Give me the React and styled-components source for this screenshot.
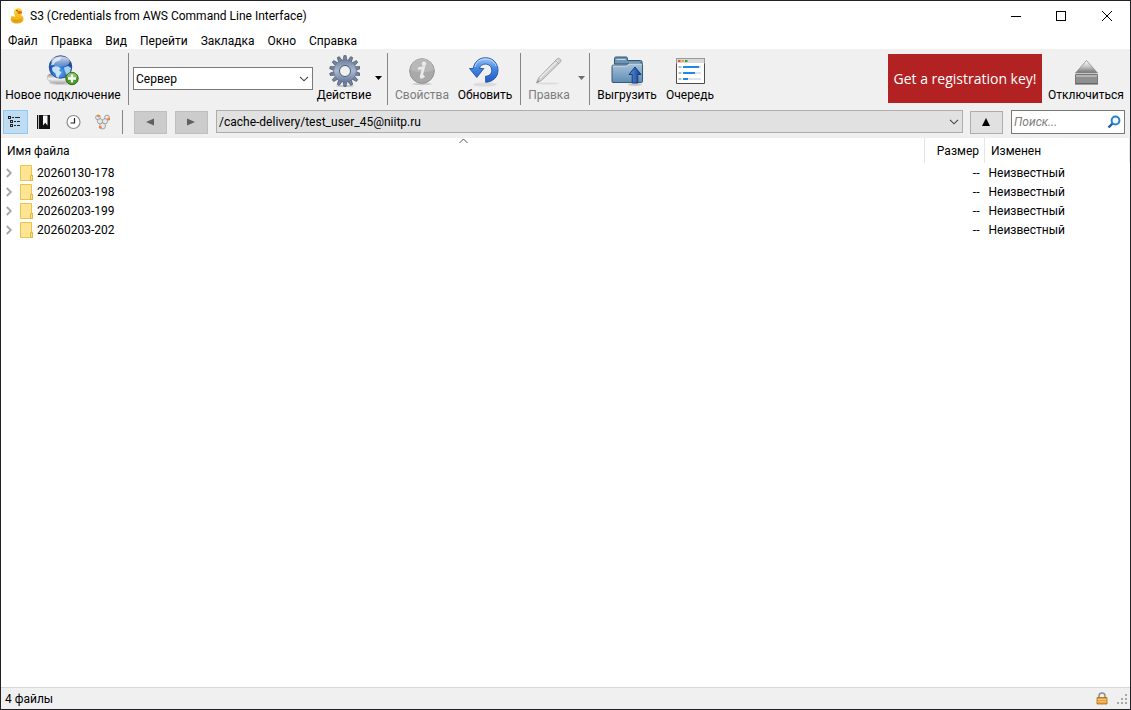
import React, { useState } from "react";
import styled, { createGlobalStyle, css } from "styled-components";

const Global = createGlobalStyle`
  *, *::before, *::after { box-sizing: border-box; }
  body { margin: 0; background: #fff; }
  body, button, input, select, table {
    font-family: "Segoe UI", Roboto, "Open Sans", sans-serif;
    font-size: 12px;
    line-height: 16px;
    color: #000;
  }
`;

const Window = styled.div`
  display: flex;
  flex-direction: column;
  min-height: 100vh;
  border: 1px solid #222226;
  background: #fff;
  white-space: nowrap;
`;

const TitleBar = styled.header`
  display: flex;
  align-items: center;
  height: 30px;
  padding-left: 7px;
`;

const Title = styled.h1`
  flex: 1;
  margin: 0 0 0 4px;
  font-size: 12px;
  font-weight: 400;
`;

const CaptionButton = styled.button`
  display: flex;
  align-items: center;
  justify-content: center;
  width: 46px;
  height: 28px;
  padding: 0;
  border: 0;
  background: none;
`;

const MenuBar = styled.nav`
  display: flex;
  height: 18px;
`;

const MenuItem = styled.button`
  padding: 2px 6px 0 7px;
  border: 0;
  background: none;
`;

const Toolbar = styled.div`
  display: flex;
  height: 59px;
  padding: 4px 4px 0 2px;
  background: #f0f0f0;
`;

const ToolButton = styled.button`
  display: flex;
  flex: none;
  flex-direction: column;
  align-items: center;
  width: ${(p) => p.$width}px;
  height: 52px;
  padding: 2px 0 0;
  border: 0;
  background: none;
  color: #000;
  &:disabled { color: #7d7d7d; }
`;

const ArrowButton = styled.button`
  flex: none;
  display: flex;
  align-items: center;
  justify-content: ${(p) => p.$align || "flex-start"};
  width: ${(p) => p.$width}px;
  height: 50px;
  padding: 0;
  border: 0;
  background: none;
  color: #000;
  &:disabled { color: #6d6d6d; }
`;

const Separator = styled.div`
  flex: none;
  width: 1px;
  height: ${(p) => p.$height}px;
  margin: 0 ${(p) => p.$after}px 0 ${(p) => p.$before}px;
  background: #858585;
`;

const Spacer = styled.div`
  flex: 1;
`;

const RegisterButton = styled.button`
  flex: none;
  width: 154px;
  height: 49px;
  margin: 1px 4px 0 0;
  padding: 0;
  border: 0;
  background: #b22222;
  color: #fff;
  font-family: "Segoe UI", "Open Sans", sans-serif;
  font-size: 14px;
`;

const SelectBox = styled.div`
  display: grid;
  align-items: center;
  flex: ${(p) => (p.$grow ? "1" : "none")};
  min-width: 0;
  width: ${(p) => (p.$grow ? "auto" : "180px")};
  margin-top: ${(p) => (p.$grow ? 0 : 14)}px;
  height: 23px;
  & > * { grid-area: 1 / 1; }
  & > svg { justify-self: end; margin-right: 4px; pointer-events: none; }
`;

const Select = styled.select`
  appearance: none;
  width: 100%;
  height: 23px;
  padding: 0 20px 0 2px;
  border: 1px solid ${(p) => (p.$grey ? "#adadad" : "#7a7a7a")};
  border-radius: 0;
  background: ${(p) => (p.$grey ? "#e1e1e1" : "#fff")};
`;

const NavBar = styled.div`
  display: flex;
  height: 30px;
  padding: 2px 5px 0 2px;
  background: #f0f0f0;
`;

const ToggleButton = styled.button`
  flex: none;
  display: flex;
  align-items: center;
  justify-content: center;
  width: 25px;
  height: 24px;
  margin-right: 4px;
  padding: 0;
  border: 1px solid transparent;
  background: none;
  ${(p) =>
    p.$active &&
    css`
      border-color: #90c8f6;
      background: #c0dcf3;
    `}
`;

const StepButton = styled.button`
  flex: none;
  display: flex;
  align-items: center;
  justify-content: center;
  width: 33px;
  height: 23px;
  margin: 1px 8px 0 0;
  padding: 0 1px 1px 0;
  border: 1px solid #adadad;
  background: #e1e1e1;
  color: #000;
  &:disabled {
    border-color: #bfbfbf;
    background: #cccccc;
    color: #5f5f5f;
  }
`;

const UpButton = styled(StepButton)`
  margin-left: 7px;
`;

const SearchField = styled.label`
  flex: none;
  display: flex;
  align-items: center;
  width: 114px;
  height: 24px;
  padding: 0 3px 0 2px;
  border: 1px solid #7a7a7a;
  background: #fff;
`;

const SearchInput = styled.input`
  flex: 1;
  min-width: 0;
  padding: 0;
  border: 0;
  outline: 0;
  background: none;
  &::placeholder { color: #808080; font-style: italic; opacity: 1; }
`;

const Files = styled.main`
  flex: 1;
`;

const FileTable = styled.table`
  width: 100%;
  border-collapse: collapse;
  table-layout: fixed;
`;

const HeadCell = styled.th`
  position: relative;
  width: ${(p) => p.$width || "auto"};
  height: 25px;
  padding: 0 5px 0 6px;
  border-right: 1px solid #e5e5e5;
  font-weight: 400;
  text-align: ${(p) => p.$align || "left"};
`;

const SortMark = styled.svg`
  position: absolute;
  top: 0;
  left: 50%;
  margin-left: -4px;
`;

const Cell = styled.td`
  height: 19px;
  padding: 0 5px 0 4px;
  text-align: ${(p) => p.$align || "left"};
`;

const FileName = styled.div`
  display: flex;
  align-items: center;
  svg { margin-right: 3px; }
`;

const Expander = styled.button`
  display: flex;
  width: 15px;
  padding: 0;
  border: 0;
  background: none;
`;

const StatusBar = styled.footer`
  display: flex;
  align-items: center;
  height: 22px;
  padding: 0 2px 0 4px;
  border-top: 1px solid #d7d7d7;
  background: #f0f0f0;
  svg { margin-left: 8px; }
`;

const DuckIcon = () => (
  <svg width="18" height="18" viewBox="0 0 18 18">
    <defs>
      <linearGradient id="duck" x1="0" y1="0" x2="0" y2="1">
        <stop offset="0" stopColor="#ffdc30" />
        <stop offset="1" stopColor="#e9a313" />
      </linearGradient>
    </defs>
    <path d="M9 1.500c3-1 5.500.800 5.200 3.800-.2 1.500-1 2.300-1 3 1.800.8 2.600 2.200 2.300 4.200-.4 2.600-2.900 4-6.400 4-3.700 0-6.100-1.500-6.300-4-.1-2 .4-2.900 1-3.700 1 .9 2.400 1.100 3.700.4C6.100 8.200 5.900 6.600 6.100 4.600 6.200 3 7.300 1.900 9 1.500z" fill="url(#duck)" />
    <path d="M9.500 4.600c1.600-.9 3.300-.6 4.700.6-1.100 1.600-3.200 2-4.500 1z" fill="#ef5b24" />
    <path d="M4.500 12.300c1.700 2.200 6.800 2.200 8.800-.3" fill="none" stroke="#d98f0c" />
    <circle cx="9" cy="3.600" r=".8" fill="#6b4a00" />
  </svg>
);

const GlobeIcon = () => (
  <svg width="32" height="32" viewBox="0 0 32 32">
    <defs>
      <radialGradient id="globe" cx=".45" cy=".75" r=".75">
        <stop offset="0" stopColor="#5fb2f2" />
        <stop offset=".5" stopColor="#2062c0" />
        <stop offset="1" stopColor="#123a85" />
      </radialGradient>
      <linearGradient id="shine" x1="0" y1="0" x2="0" y2="1">
        <stop offset="0" stopColor="#fff" stopOpacity=".85" />
        <stop offset="1" stopColor="#fff" stopOpacity=".2" />
      </linearGradient>
      <linearGradient id="base" x1="0" y1="0" x2="0" y2="1">
        <stop offset="0" stopColor="#7a7a7a" />
        <stop offset=".55" stopColor="#f4f4f4" />
        <stop offset="1" stopColor="#a8a8a8" />
      </linearGradient>
    </defs>
    <ellipse cx="15" cy="28" rx="13" ry="2" fill="#bbb" opacity=".6" />
    <path d="M0 22c1-3 4-4 7-4h13c4 0 6 2 6 5s-5 5.500-13 5.500S0 26 0 22z" fill="url(#base)" stroke="#a0a0a0" strokeWidth=".5" />
    <circle cx="13.500" cy="12" r="11.300" fill="url(#globe)" stroke="#173b7e" strokeWidth=".7" />
    <path d="M5 13c1.500-2 5-2.500 7-1l1.500 1.500-1.500 2 2.500 2-2 2.500-1 3-2-1-1-3.500-3-2.500z" fill="#d5eafb" opacity=".9" />
    <path d="M17 12.500l4-1.500 3 2-1 4.500-3 3-1.500-3-1-2.500z" fill="#c3e0f9" opacity=".85" />
    <path d="M5.500 6c2-2.500 5-4 9-3.500l-2 3-4 1.500-2 3-3 .5z" fill="#c9def3" opacity=".8" />
    <ellipse cx="13.500" cy="6.500" rx="9.300" ry="5.300" fill="url(#shine)" />
    <circle cx="25" cy="23.500" r="6.200" fill="#4a9c28" stroke="#2c6e18" />
    <path d="M19.700 22a5.400 5.400 0 0 1 10.600 0c-3 1.500-7.600 1.500-10.600 0z" fill="#9bd077" opacity=".7" />
    <path d="M25 19.500v8M21 23.500h8" stroke="#fff" strokeWidth="2.400" />
  </svg>
);

const teeth = Array.from({ length: 14 }, (_, i) => (i * 360) / 14);

const GearIcon = () => (
  <svg width="32" height="32" viewBox="0 0 32 32">
    <defs>
      <linearGradient id="gear" x1="0" y1="0" x2="0" y2="1">
        <stop offset="0" stopColor="#70829f" />
        <stop offset=".5" stopColor="#a9b9d2" />
        <stop offset="1" stopColor="#66779a" />
      </linearGradient>
    </defs>
    <ellipse cx="17" cy="31" rx="9" ry="1" fill="#999" opacity=".5" />
    <g fill="#74859f" stroke="#3b4860" strokeWidth=".6">
      {teeth.map((a) => (
        <path key={a} d="M15 6l.9-5.400h2.200l.9 5.400z" transform={`rotate(${a} 17 16)`} />
      ))}
    </g>
    <circle cx="17" cy="16" r="11.300" fill="url(#gear)" stroke="#5a6a86" strokeWidth=".5" />
    <circle cx="17" cy="16" r="5.500" fill="#f0f0f0" stroke="#4e5d78" />
  </svg>
);

const InfoIcon = () => (
  <svg width="32" height="32" viewBox="0 0 32 32">
    <ellipse cx="16" cy="29" rx="10" ry="1.200" fill="#ccc" />
    <circle cx="16" cy="16" r="12.300" fill="#a9a9a9" stroke="#929292" />
    <path d="M4.500 15a11.500 11.500 0 0 1 23 0c-7 3-16 3-23 0z" fill="#b8b8b8" />
    <circle cx="18" cy="8.800" r="2.200" fill="#ebebeb" />
    <path d="M12 13.800l5.500-1.300-2.300 9c-.2 1.300.8 1 3-.7" fill="none" stroke="#ebebeb" strokeWidth="2.700" />
  </svg>
);

const RefreshIcon = () => (
  <svg width="32" height="32" viewBox="0 0 32 32">
    <defs>
      <linearGradient id="refresh" x1="0" y1="0" x2="0" y2="1">
        <stop offset="0" stopColor="#9fc6f5" />
        <stop offset=".45" stopColor="#4387e2" />
        <stop offset="1" stopColor="#1f59c0" />
      </linearGradient>
    </defs>
    <ellipse cx="16" cy="29.500" rx="12" ry="2" fill="#dcdcdc" />
    <path d="M.5 13.500h3.700C5.300 7 10 2.700 16.500 2.700c7.400 0 12.500 5.500 12.500 12.600 0 6.700-5 11.700-12.300 12l-.2-6c4-.3 6.200-2.600 6.200-6 0-3.600-2.500-6.200-6.200-6.200-3.200 0-5.400 1.700-6 4.400h4.300L7.800 22.500z" fill="url(#refresh)" stroke="#2254a8" strokeWidth=".9" />
    <path d="M6 12c1-5 5-8 10.500-8 5 0 9 3 10.700 7" fill="none" stroke="#cfe3fb" strokeWidth="1" opacity=".8" />
  </svg>
);

const PencilIcon = () => (
  <svg width="32" height="32" viewBox="0 0 32 32">
    <ellipse cx="15" cy="28.500" rx="11" ry="1" fill="#dcdcdc" />
    <path d="M3.500 28l2-5L24.500 3.500c1.500-1.200 4.500 1.500 3.200 3.300L8.500 25.500z" fill="#cfcfcf" stroke="#ababab" />
    <path d="M7 23L25 5.500" fill="none" stroke="#ededed" strokeWidth="1.200" />
    <path d="M22.500 5.500l3.500 3.500" stroke="#a5a5a5" />
    <path d="M3.500 28l1.200-3.300 2 2z" fill="#999" />
  </svg>
);

const UploadIcon = () => (
  <svg width="32" height="32" viewBox="0 0 32 32">
    <defs>
      <linearGradient id="folder" x1="0" y1="0" x2="0" y2="1">
        <stop offset="0" stopColor="#a9c4da" />
        <stop offset="1" stopColor="#5f8db4" />
      </linearGradient>
      <linearGradient id="up" x1="0" y1="0" x2="1" y2="0">
        <stop offset="0" stopColor="#5c92dc" />
        <stop offset="1" stopColor="#123c8f" />
      </linearGradient>
    </defs>
    <path d="M3.500 8V3.500c0-1 .5-1.500 1.500-1.500h10c1 0 1.500.5 1.500 1.500v2h13c1 0 1.500.5 1.500 1.500v2H3.500z" fill="#6e94b3" stroke="#33546f" />
    <path d="M5.500 4.500h9M18 7.500h11" stroke="#c5d8e7" />
    <path d="M1 11.500c0-1 .5-1.500 1.500-1.500h13l2-2h12.500c1 0 1.500.5 1.500 1.500v17c0 .7-.3 1-1 1H2c-.7 0-1-.3-1-1z" fill="url(#folder)" stroke="#37597a" />
    <path d="M2 11.200h14l2-2h12" fill="none" stroke="#d0dfec" strokeWidth=".8" />
    <ellipse cx="24" cy="29.500" rx="7" ry="1.500" fill="#888" opacity=".4" />
    <path d="M24 12l6 7.500h-3.200v8.500h-5.600v-8.500H18z" fill="url(#up)" stroke="#173a78" />
  </svg>
);

const QueueIcon = () => (
  <svg width="32" height="32" viewBox="0 0 32 32">
    <path d="M2.500 3.500h28v25h-28z" fill="#fff" stroke="#4c4c4c" />
    <path d="M3 4h27v4H3z" fill="#d9d9d9" />
    <path d="M2.500 8.500v-5h28v5" fill="none" stroke="#9a9a9a" />
    <path d="M4 5h2.500v2H4z" fill="#e0523f" />
    <path d="M7.500 5H10v2H7.500z" fill="#f0a32b" />
    <path d="M11 5h2.500v2H11z" fill="#25a34a" />
    <path d="M4.500 12H7.500M4.500 18H7.500M4.500 24H7.500" stroke="#bbb" strokeWidth="2" />
    <path d="M9 12h18M9 18h18M9 24h18" stroke="#dfe3e7" strokeWidth="2" />
    <path d="M9 12h16M9 18h12M9 24h5" stroke="#1e88e5" strokeWidth="2" />
  </svg>
);

const EjectIcon = () => (
  <svg width="32" height="32" viewBox="0 0 32 32">
    <defs>
      <linearGradient id="eject" x1="0" y1="0" x2="0" y2="1">
        <stop offset="0" stopColor="#fff" />
        <stop offset=".5" stopColor="#c4c4c4" />
        <stop offset="1" stopColor="#707070" />
      </linearGradient>
    </defs>
    <path d="M16.500 5.500L27.500 18h-22z" fill="url(#eject)" stroke="#8a8a8a" strokeWidth=".8" />
    <path d="M5.500 19.500h22v9h-22z" fill="#8f8f8f" stroke="#777" />
    <path d="M6 21h21" stroke="#d8d8d8" />
    <path d="M5 29h23" stroke="#555" />
  </svg>
);

const OutlineIcon = () => (
  <svg width="16" height="16" viewBox="0 0 16 16" shapeRendering="crispEdges" fill="none" stroke="#222">
    <path d="M.5 2.500h2v2h-2zM2.500 6.500h2v2h-2zM2.500 10.500h2v2h-2zM4 3.500h2M7 3.500h5M6 7.500h2M9 7.500h3M6 11.500h2M9 11.500h3" />
  </svg>
);

const BookIcon = () => (
  <svg width="16" height="16" viewBox="0 0 16 16">
    <path d="M0 1h1v14H0z" fill="#111" />
    <path d="M1.500 1v14" stroke="#bbb" />
    <path d="M2 1h11v14H2z" fill="#111" />
    <path d="M6 1.500h4.500v10L8.200 8.800 6 11.500z" fill="#f8f8f8" />
  </svg>
);

const ClockIcon = () => (
  <svg width="16" height="16" viewBox="0 0 16 16">
    <circle cx="7.500" cy="8" r="6.500" fill="#fff" stroke="#8c8c8c" strokeWidth="1.200" />
    <path d="M8.500 4v5H4.500" fill="none" stroke="#222" strokeWidth="1.200" />
  </svg>
);

const BonjourIcon = () => (
  <svg width="16" height="16" viewBox="0 0 16 16">
    <g fill="#e8e8e8" stroke="#9a9a9a" strokeWidth=".9">
      <circle cx="3" cy="3.500" r="2.400" />
      <circle cx="12" cy="3.500" r="2.400" />
      <circle cx="5" cy="7.300" r="2.600" />
      <circle cx="10" cy="7.300" r="2.600" />
      <circle cx="7.500" cy="12" r="3" />
    </g>
    <g fill="#f08335">
      <circle cx="3.500" cy="2" r="1.300" />
      <circle cx="13.700" cy="5" r="1.500" />
      <circle cx="5.300" cy="13.300" r="1.400" />
    </g>
  </svg>
);

const Chevron = () => (
  <svg width="10" height="6" viewBox="0 0 10 6">
    <path d="M1 .8l4 4 4-4" fill="none" stroke="#444" strokeWidth="1.100" />
  </svg>
);

const Triangle = ({ d }) => (
  <svg width="8" height="8" viewBox="0 0 8 8">
    <path d={d} fill="currentColor" />
  </svg>
);

const DropMark = () => (
  <svg width="7" height="4" viewBox="0 0 7 4">
    <path d="M0 0h7L3.500 4z" fill="currentColor" />
  </svg>
);

const SearchIcon = () => (
  <svg width="14" height="14" viewBox="0 0 14 14" fill="none">
    <path d="M1.500 12.500l4-4" stroke="#1f5aa8" strokeWidth="2.400" />
    <circle cx="8.500" cy="5.500" r="3.900" stroke="#2f7fcb" strokeWidth="2" fill="#eef7ff" />
  </svg>
);

const ExpandIcon = () => (
  <svg width="8" height="10" viewBox="0 0 8 10">
    <path d="M1.800 1l4 4-4 4" fill="none" stroke="#a6a6a6" strokeWidth="1.800" />
  </svg>
);

const FolderIcon = () => (
  <svg width="14" height="16" viewBox="0 0 14 16">
    <path d="M.5.500h11v9.500h1v5.500H.5z" fill="#ffe494" stroke="#ebc548" />
    <path d="M10.500 15.500v-5h2v5z" fill="#ffe08a" stroke="#e3b93c" />
  </svg>
);

const LockIcon = () => (
  <svg width="12" height="13" viewBox="0 0 12 13">
    <path d="M3 6V3.800C3 2 4.200 1 6 1s3 1 3 2.800V6" fill="none" stroke="#8d8d8d" strokeWidth="1.500" />
    <path d="M1 5.500h10V12H1z" fill="#e8a13a" stroke="#a86a17" strokeWidth=".8" />
    <path d="M1.500 7.500h9M1.500 9.700h9" stroke="#f8cf83" strokeWidth=".8" />
  </svg>
);

const GripIcon = () => (
  <svg width="12" height="12" viewBox="0 0 12 12" shapeRendering="crispEdges">
    <path d="M9 1h2v2H9zM9 5h2v2H9zM9 9h2v2H9zM5 5h2v2H5zM5 9h2v2H5zM1 9h2v2H1z" fill="#a8a8a8" />
  </svg>
);

const menus = ["Файл", "Правка", "Вид", "Перейти", "Закладка", "Окно", "Справка"];
const files = ["20260130-178", "20260203-198", "20260203-199", "20260203-202"];
const views = [
  ["Структура", OutlineIcon],
  ["Закладки", BookIcon],
  ["История", ClockIcon],
  ["Bonjour", BonjourIcon],
];

export default function App() {
  const [view, setView] = useState(0);
  return (
    <Window>
      <Global />
      <TitleBar>
        <DuckIcon />
        <Title>S3 (Credentials from AWS Command Line Interface)</Title>
        <CaptionButton aria-label="Свернуть">
          <svg width="12" height="10" shapeRendering="crispEdges"><path d="M2 5.500h10" stroke="#000" /></svg>
        </CaptionButton>
        <CaptionButton aria-label="Развернуть">
          <svg width="10" height="10" shapeRendering="crispEdges"><path d="M.5.500h9v9h-9z" fill="none" stroke="#000" /></svg>
        </CaptionButton>
        <CaptionButton aria-label="Закрыть">
          <svg width="10" height="10"><path d="M0 0l10 10M10 0L0 10" stroke="#000" /></svg>
        </CaptionButton>
      </TitleBar>
      <MenuBar>
        {menus.map((m) => <MenuItem key={m}>{m}</MenuItem>)}
      </MenuBar>

      <Toolbar>
        <ToolButton $width={120}><GlobeIcon />Новое подключение</ToolButton>
        <Separator $height={52} $before={5} $after={4} />
        <SelectBox>
          <Select aria-label="Сервер"><option>Сервер</option></Select>
          <Chevron />
        </SelectBox>
        <ToolButton $width={62}><GearIcon />Действие</ToolButton>
        <ArrowButton $width={12} aria-label="Меню действий"><DropMark /></ArrowButton>
        <Separator $height={52} $before={0} $after={4} />
        <ToolButton $width={60} disabled><InfoIcon />Свойства</ToolButton>
        <ToolButton $width={66}><RefreshIcon />Обновить</ToolButton>
        <Separator $height={52} $before={2} $after={4} />
        <ToolButton $width={48} disabled><PencilIcon />Правка</ToolButton>
        <ArrowButton $width={16} $align="center" aria-label="Выбрать редактор" disabled><DropMark /></ArrowButton>
        <Separator $height={52} $before={0} $after={4} />
        <ToolButton $width={66}><UploadIcon />Выгрузить</ToolButton>
        <ToolButton $width={60}><QueueIcon />Очередь</ToolButton>
        <Spacer />
        <RegisterButton>Get a registration key!</RegisterButton>
        <ToolButton $width={80}><EjectIcon />Отключиться</ToolButton>
      </Toolbar>

      <NavBar>
        {views.map(([name, Icon], i) => (
          <ToggleButton key={name} aria-label={name} $active={view === i} onClick={() => setView(i)}>
            <Icon />
          </ToggleButton>
        ))}
        <Separator $height={24} $before={3} $after={11} />
        <StepButton aria-label="Назад" disabled><Triangle d="M0 4l8-3.500v7z" /></StepButton>
        <StepButton aria-label="Вперёд" disabled><Triangle d="M8 4L0 .5v7z" /></StepButton>
        <SelectBox $grow>
          <Select $grey aria-label="Путь"><option>/cache-delivery/test_user_45@niitp.ru</option></Select>
          <Chevron />
        </SelectBox>
        <UpButton aria-label="Вверх"><Triangle d="M4 0l4 8H0z" /></UpButton>
        <SearchField>
          <SearchInput type="text" placeholder="Поиск..." aria-label="Поиск" />
          <SearchIcon />
        </SearchField>
      </NavBar>

      <Files>
        <FileTable>
          <thead>
            <tr>
              <HeadCell>
                Имя файла
                <SortMark width="9" height="6" viewBox="0 0 9 6">
                  <path d="M.5 5l4-4 4 4" fill="none" stroke="#555" />
                </SortMark>
              </HeadCell>
              <HeadCell $width="60px" $align="right">Размер</HeadCell>
              <HeadCell $width="145px">Изменен</HeadCell>
            </tr>
          </thead>
          <tbody>
            {files.map((f) => (
              <tr key={f}>
                <Cell>
                  <FileName>
                    <Expander aria-label={"Раскрыть " + f}><ExpandIcon /></Expander>
                    <FolderIcon />
                    {f}
                  </FileName>
                </Cell>
                <Cell $align="right">--</Cell>
                <Cell>Неизвестный</Cell>
              </tr>
            ))}
          </tbody>
        </FileTable>
      </Files>

      <StatusBar>
        4 файлы
        <Spacer />
        <LockIcon />
        <GripIcon />
      </StatusBar>
    </Window>
  );
}
